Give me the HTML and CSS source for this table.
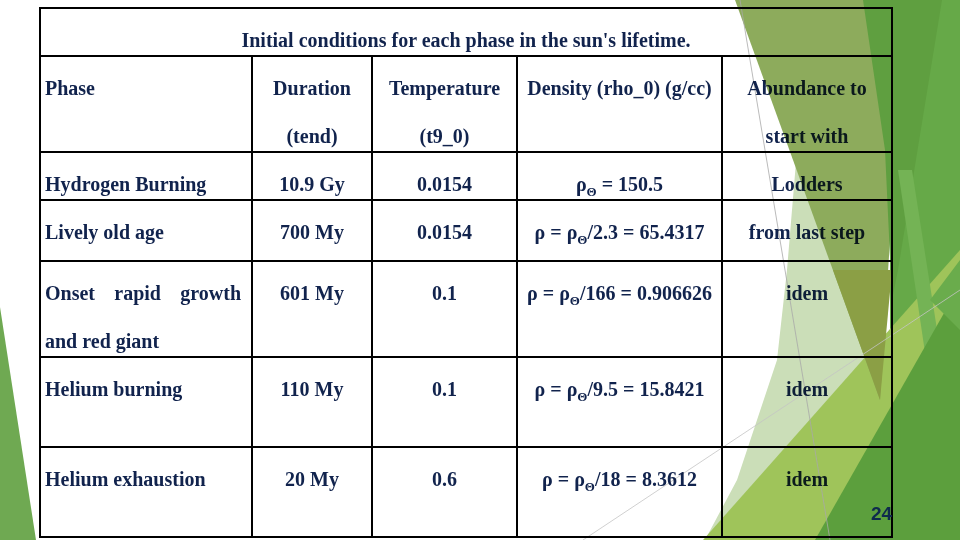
FILE: index.html
```html
<!DOCTYPE html>
<html>
<head>
<meta charset="utf-8">
<link rel="stylesheet" href="styles.css">
</head>
<body>
<div class="slide">
  <div class="table">
    <div class="cell title">Initial conditions for each phase in the sun's lifetime.</div>

    <div class="cell phase">Phase</div>
    <div class="cell">Duration<br>(tend)</div>
    <div class="cell">Temperature<br>(t9_0)</div>
    <div class="cell">Density (rho_0) (g/cc)</div>
    <div class="cell">Abundance to<br>start with</div>

    <div class="cell phase">Hydrogen Burning</div>
    <div class="cell">10.9 Gy</div>
    <div class="cell">0.0154</div>
    <div class="cell">ρ<sub class="sun">Θ</sub> = 150.5</div>
    <div class="cell">Lodders</div>

    <div class="cell phase">Lively old age</div>
    <div class="cell">700 My</div>
    <div class="cell">0.0154</div>
    <div class="cell">ρ = ρ<sub class="sun">Θ</sub>/2.3 = 65.4317</div>
    <div class="cell">from last step</div>

    <div class="cell phase justify">Onset rapid growth and red giant</div>
    <div class="cell">601 My</div>
    <div class="cell">0.1</div>
    <div class="cell">ρ = ρ<sub class="sun">Θ</sub>/166 = 0.906626</div>
    <div class="cell">idem</div>

    <div class="cell phase">Helium burning</div>
    <div class="cell">110 My</div>
    <div class="cell">0.1</div>
    <div class="cell">ρ = ρ<sub class="sun">Θ</sub>/9.5 = 15.8421</div>
    <div class="cell">idem</div>

    <div class="cell phase">Helium exhaustion</div>
    <div class="cell">20 My</div>
    <div class="cell">0.6</div>
    <div class="cell">ρ = ρ<sub class="sun">Θ</sub>/18 = 8.3612</div>
    <div class="cell">idem</div>
  </div>

  <svg class="deco" width="960" height="540" viewBox="0 0 960 540" aria-hidden="true">
    <polygon points="0,307 36,540 0,540" fill="#6fa952"/>
    <rect x="890" y="0" width="70" height="540" fill="#66a948"/>
    <polygon points="797,150 787,270 777,360 747,450 737,480 705,540 880,540 860,300" fill="#cbdeb8"/>
    <polygon points="703,540 960,250 960,540" fill="#9fc45a"/>
    <polygon points="735,0 905,0 880,400" fill="#8dab5c"/>
    <polygon points="833,270 892,270 880,400" fill="#8b9f45"/>
    <polygon points="863,0 942,0 898,270 892,300 885,150" fill="#5f9f40"/>
    <polygon points="898,170 912,170 948,400 935,420" fill="#74b355"/>
    <polygon points="815,540 960,285 960,540" fill="#5c9f3d"/>
    <polygon points="930,300 960,260 960,330" fill="#6aac4c"/>
    <line x1="740" y1="0" x2="830" y2="540" stroke="#a8a8a8" stroke-width="0.8"/>
    <line x1="583" y1="540" x2="960" y2="290" stroke="#c4c4c4" stroke-width="0.8"/>
  </svg>

  <div class="pagenum">24</div>
</div>
</body>
</html>
```

FILE: styles.css
```css
html, body {
  margin: 0;
  padding: 0;
  background: #ffffff;
}

.slide {
  position: relative;
  width: 960px;
  height: 540px;
  overflow: hidden;
  box-sizing: border-box;
  padding: 7px 0 0 39px;
  background: #ffffff;
  isolation: isolate;
}

.deco {
  position: absolute;
  left: 0;
  top: 0;
  z-index: 2;
  mix-blend-mode: multiply;
  pointer-events: none;
}

.table {
  position: relative;
  z-index: 1;
  display: grid;
  grid-template-columns: 212px 120px 145px 205px 170px;
  grid-template-rows: 48px 96px 48px 61px 96px 90px 90px;
  width: max-content;
  border-top: 2px solid #000;
  border-left: 2px solid #000;
  font-family: "Liberation Serif", "Times New Roman", serif;
  font-weight: bold;
  font-size: 20px;
  color: #11234d;
}

.cell {
  box-sizing: border-box;
  border-right: 2px solid #000;
  border-bottom: 2px solid #000;
  padding: 7px 4px 0;
  line-height: 48px;
  text-align: center;
  white-space: nowrap;
  overflow: visible;
  min-height: 0;
}

.title {
  grid-column: 1 / -1;
}

.phase {
  text-align: left;
  padding-left: 4px;
}

.justify {
  white-space: normal;
  text-align: justify;
  padding-right: 10px;
}

.sun {
  font-size: 13px;
  line-height: 0;
  vertical-align: -5px;
}

.pagenum {
  position: absolute;
  z-index: 3;
  left: 871px;
  top: 502px;
  font-family: "Liberation Sans", Arial, sans-serif;
  font-weight: bold;
  font-size: 19px;
  line-height: 24px;
  color: #0e2a4d;
}
```
